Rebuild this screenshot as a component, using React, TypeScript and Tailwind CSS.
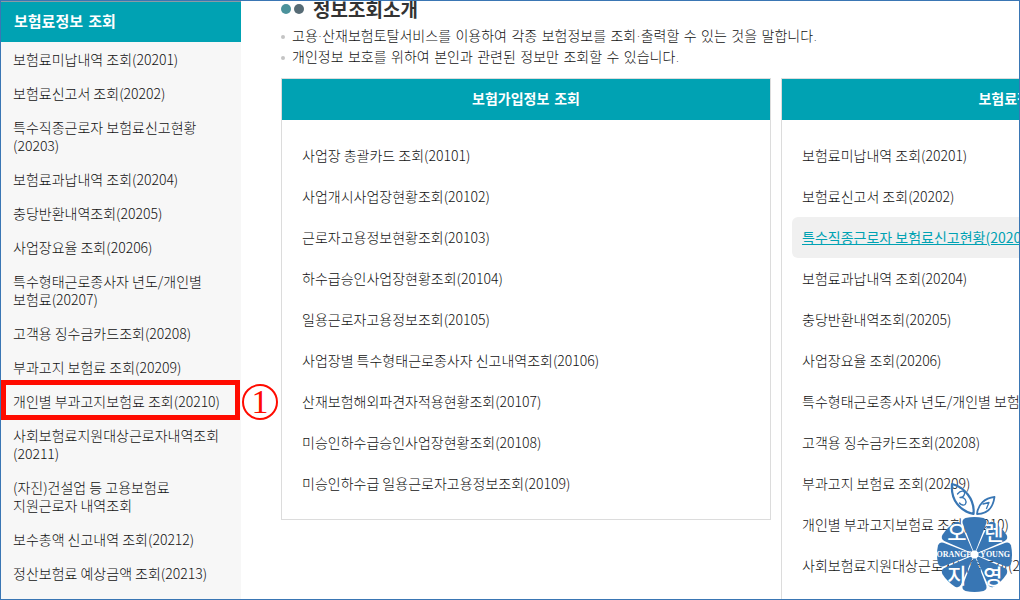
const premiumMenu: string[][] = [
  ["보험료미납내역 조회(20201)"],
  ["보험료신고서 조회(20202)"],
  ["특수직종근로자 보험료신고현황", "(20203)"],
  ["보험료과납내역 조회(20204)"],
  ["충당반환내역조회(20205)"],
  ["사업장요율 조회(20206)"],
  ["특수형태근로종사자 년도/개인별", "보험료(20207)"],
  ["고객용 징수금카드조회(20208)"],
  ["부과고지 보험료 조회(20209)"],
  ["개인별 부과고지보험료 조회(20210)"],
  ["사회보험료지원대상근로자내역조회", "(20211)"],
  ["(자진)건설업 등 고용보험료", "지원근로자 내역조회"],
  ["보수총액 신고내역 조회(20212)"],
  ["정산보험료 예상금액 조회(20213)"],
];
const markedItem = 9;

const joinLinks = [
  "사업장 총괄카드 조회(20101)",
  "사업개시사업장현황조회(20102)",
  "근로자고용정보현황조회(20103)",
  "하수급승인사업장현황조회(20104)",
  "일용근로자고용정보조회(20105)",
  "사업장별 특수형태근로종사자 신고내역조회(20106)",
  "산재보험해외파견자적용현황조회(20107)",
  "미승인하수급승인사업장현황조회(20108)",
  "미승인하수급 일용근로자고용정보조회(20109)",
];

const premiumLinks = [
  "보험료미납내역 조회(20201)",
  "보험료신고서 조회(20202)",
  "특수직종근로자 보험료신고현황(20203)",
  "보험료과납내역 조회(20204)",
  "충당반환내역조회(20205)",
  "사업장요율 조회(20206)",
  "특수형태근로종사자 년도/개인별 보험료(20207)",
  "고객용 징수금카드조회(20208)",
  "부과고지 보험료 조회(20209)",
  "개인별 부과고지보험료 조회(20210)",
  "사회보험료지원대상근로자내역조회(20211)",
];

function StepMarker() {
  return (
    <>
      <span className="pointer-events-none absolute -top-1 right-px left-0 h-10 border-[5px] border-[#ff0b00]" />
      <span className="absolute top-0 left-full ml-px flex h-9 w-9 items-center justify-center rounded-full border-2 border-[#ff0b00] font-['Liberation_Serif',serif] text-[34px] leading-9 font-normal text-[#ff0b00]">
        1
      </span>
    </>
  );
}

function Sidebar() {
  return (
    <nav aria-label="보험료정보 조회" className="w-60 shrink-0 bg-[#f7f7f7]">
      <h2 className="border-t border-[#8a9aa5] bg-[#00a2b3] px-[13px] font-['DejaVu_Sans','Noto_Sans_CJK_KR',sans-serif] text-[15px] leading-10 font-bold text-white">
        보험료정보 조회
      </h2>
      <ul>
        {premiumMenu.map((lines, i) => (
          <li key={lines[0]} className="relative">
            <a href="#" className="block px-3 py-2 whitespace-nowrap">
              {lines.map((line) => (
                <span key={line} className="block leading-[18px]">
                  {line}
                </span>
              ))}
            </a>
            {i === markedItem && <StepMarker />}
          </li>
        ))}
      </ul>
    </nav>
  );
}

function Panel({ title, links, active }: { title: string; links: string[]; active?: number }) {
  return (
    <section className="w-[490px] shrink-0 border border-[#dcdcdc]">
      <h2 className="bg-[#00a2b3] text-center font-['DejaVu_Sans','Noto_Sans_CJK_KR',sans-serif] leading-[41px] font-bold text-white">
        {title}
      </h2>
      <ul className="px-2.5 py-[15px]">
        {links.map((link, i) => (
          <li key={link}>
            <a
              href="#"
              className={
                i === active
                  ? "block rounded-md bg-[#f0f0f0] px-2.5 leading-[41px] font-normal whitespace-nowrap text-[#00a2b3] underline"
                  : "block px-2.5 leading-[41px] whitespace-nowrap"
              }
            >
              {link}
            </a>
          </li>
        ))}
      </ul>
    </section>
  );
}

const slices = [0, 45, 90, 135, 180, 225, 270, 315];

function Logo() {
  return (
    <svg
      viewBox="934 482 80 112"
      className="absolute right-[5px] bottom-[5px] h-28 w-20"
      role="img"
      aria-label="Orange Young"
    >
      <g fill="none" stroke="#3876b4" strokeLinecap="round" strokeLinejoin="round">
        <path strokeWidth="2.2" d="M952 484 C964 487 975 499 973.5 514 C960 511 950.5 500 952 484Z" />
        <path strokeWidth="1.8" d="M994.5 497 C985 498 978 504 977 514 C988 514 993 508 994.5 497Z" />
        <path strokeWidth="1.3" d="M957.500 494 C961 489.500 965.500 491 964.500 494 C964 496 962 497.500 960 497.500 C965 497 967 501 965.500 504 C964.500 506 961 505 959.500 503" />
        <path strokeWidth="1.3" d="M983 504 L989 502.500 L986.500 508.500" />
      </g>
      <g fill="#3876b4">
        {slices.map((angle) => (
          <path
            key={angle}
            transform={`translate(974.5 554.5) rotate(${angle})`}
            d="M-1.3 -4 L-11.8 -31 Q-13 -35 -9 -36.5 Q0 -38.5 9 -36.5 Q13 -35 11.8 -31 L1.3 -4Z"
          />
        ))}
      </g>
      <circle cx="974.5" cy="554.5" r="3.5" fill="#fff" />
      <g fill="#fff" textAnchor="middle" className="font-['Noto_Sans_CJK_KR',sans-serif] text-[21px] font-medium">
        <text x="957" y="540">오</text>
        <text x="994" y="540">렌</text>
        <text x="957" y="583">지</text>
        <text x="993" y="584">영</text>
      </g>
      <g fill="#fff" textAnchor="middle" className="font-['Liberation_Serif',serif] text-[8px] font-bold">
        <text x="954" y="557">ORANGE</text>
        <text x="995" y="557">YOUNG</text>
      </g>
    </svg>
  );
}

export default function App() {
  return (
    <div className="relative h-screen overflow-hidden border border-[#3a76b4] bg-white font-['Noto_Sans_CJK_KR',sans-serif] text-sm font-light text-[#111]">
      <div className="flex min-h-full">
        <Sidebar />
        <main className="min-w-0 flex-1 pl-10">
          <div className="-mt-2 flex items-center gap-[3px]">
            <span className="h-2.5 w-2.5 rounded-full bg-[#4b929b]" />
            <span className="h-2.5 w-2.5 rounded-full bg-[#566b75]" />
            <h1 className="pl-1.5 text-[19px] leading-8 font-bold text-[#333]">정보조회소개</h1>
          </div>
          <ul className="mt-px font-['DejaVu_Sans','Noto_Sans_CJK_KR',sans-serif] leading-[21px]">
            {[
              "고용·산재보험토탈서비스를 이용하여 각종 보험정보를 조회·출력할 수 있는 것을 말합니다.",
              "개인정보 보호를 위하여 본인과 관련된 정보만 조회할 수 있습니다.",
            ].map((text) => (
              <li key={text} className="flex items-center gap-[7px]">
                <span className="h-1 w-1 rounded-full bg-[#c4c4c4]" />
                {text}
              </li>
            ))}
          </ul>
          <div className="mt-2.5 flex items-start gap-2.5">
            <Panel title="보험가입정보 조회" links={joinLinks} />
            <Panel title="보험료정보 조회" links={premiumLinks} active={2} />
          </div>
        </main>
      </div>
      <Logo />
    </div>
  );
}
